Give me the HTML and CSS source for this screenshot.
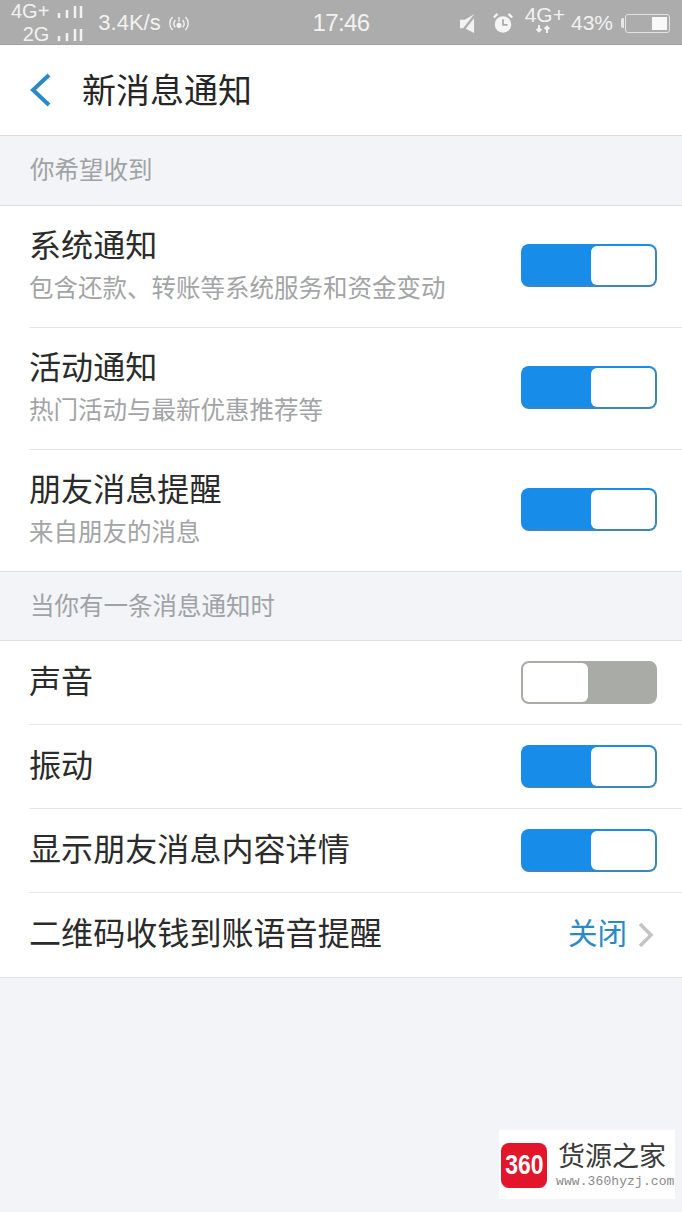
FILE: index.html
```html
<!DOCTYPE html>
<html>
  <head>
    <title>新消息通知</title>
    <link rel="stylesheet" href="styles.css">
  </head>
  <body>
    <!-- Status bar -->
    <div class="status-bar">
      <div class="status-left">
        <div class="sim-col">
          <div class="sim">4G+
            <svg class="bars" viewBox="0 0 26 12"><path d="M2 7v5M10 4v8M18 0v12M24 0v12" /></svg>
          </div>
          <div class="sim">2G
            <svg class="bars" viewBox="0 0 26 12"><path d="M2 7v5M10 4v8M18 0v12M24 0v12" /></svg>
          </div>
        </div>
        <span class="speed">3.4K/s</span>
        <svg class="hotspot" viewBox="0 0 26 20"><path d="M6 3C2 7 2 13 6 17M20 3c4 4 4 10 0 14M9 6c-2 3-2 6 0 8M17 6c2 3 2 6 0 8" /><path d="M13 3v5" /><circle cx="13" cy="12" r="2" /></svg>
      </div>
      <div class="status-time">17:46</div>
      <div class="status-right">
        <svg class="mute" viewBox="0 0 16 20"><path class="solid" d="M0 6h5l10-6v20L5 15H0z" /><path class="cut" d="M16 1 1 20" /></svg>
        <svg class="alarm" viewBox="0 0 24 24"><circle class="solid" cx="12" cy="13.500" r="9" /><path class="hands" d="M12 8v6h5" /><path class="ears" d="M2 6l4-4M22 6l-4-4" /></svg>
        <div class="net">
          <span>4G+</span>
          <svg class="arrows" viewBox="0 0 20 10"><path d="M5 0v8M2 5l3 3 3-3M15 10V2M12 5l3-3 3 3" /></svg>
        </div>
        <span class="percent">43%</span>
        <div class="battery-tip"></div>
        <div class="battery"><div class="battery-level"></div></div>
      </div>
    </div>

    <!-- Title bar -->
    <div class="nav-bar">
      <svg class="back" viewBox="0 0 24 36"><path d="M21 3 5 18l16 15" /></svg>
      <div class="nav-title">新消息通知</div>
    </div>

    <div class="section-title">你希望收到</div>
    <div class="group">
      <div class="row row-tall">
        <div class="row-text">
          <div class="row-name">系统通知</div>
          <div class="row-desc">包含还款、转账等系统服务和资金变动</div>
        </div>
        <div class="switch on"><div class="knob"></div></div>
      </div>
      <div class="row row-tall">
        <div class="row-text">
          <div class="row-name">活动通知</div>
          <div class="row-desc">热门活动与最新优惠推荐等</div>
        </div>
        <div class="switch on"><div class="knob"></div></div>
      </div>
      <div class="row row-tall">
        <div class="row-text">
          <div class="row-name">朋友消息提醒</div>
          <div class="row-desc">来自朋友的消息</div>
        </div>
        <div class="switch on"><div class="knob"></div></div>
      </div>
    </div>

    <div class="section-title section-second">当你有一条消息通知时</div>
    <div class="group">
      <div class="row">
        <div class="row-name">声音</div>
        <div class="switch off"><div class="knob"></div></div>
      </div>
      <div class="row">
        <div class="row-name">振动</div>
        <div class="switch on"><div class="knob"></div></div>
      </div>
      <div class="row">
        <div class="row-name">显示朋友消息内容详情</div>
        <div class="switch on"><div class="knob"></div></div>
      </div>
      <div class="row">
        <div class="row-name">二维码收钱到账语音提醒</div>
        <div class="row-value">
          <span class="value-text">关闭</span>
          <svg class="chevron" viewBox="0 0 16 26"><path d="M2 2l11 11L2 24" /></svg>
        </div>
      </div>
    </div>

    <!-- Watermark over the bottom corner -->
    <div class="watermark">
      <div class="mark-logo"><span class="mark-digits">360</span></div>
      <div class="mark-text">
        <div class="mark-name">货源之家</div>
        <div class="mark-url">www.360hyzj.com</div>
      </div>
    </div>
  </body>
</html>
```

FILE: styles.css
```css
* {
  box-sizing: border-box;
}

body {
  margin: 0;
  height: 1212px;
  overflow: hidden;
  position: relative;
  background-color: #f2f4f8;
  font-family: "Noto Sans CJK SC", "Liberation Sans", sans-serif;
  color: #2b2b2b;
}

/* Status bar */
.status-bar {
  height: 45px;
  background-color: #acacac;
  border-bottom: 1px solid #a2a2a2;
  color: #f2f2f2;
  font-family: "Liberation Sans", sans-serif;
  display: grid;
  grid-template-columns: 1fr auto 1fr;
  align-items: center;
  padding: 0 11px;
}

.status-left {
  display: flex;
  align-items: center;
}

.sim-col {
  display: flex;
  flex-direction: column;
  align-items: flex-end;
  font-size: 20px;
  line-height: 23px;
}

.sim {
  display: flex;
  align-items: center;
  gap: 8px;
}

.bars {
  width: 26px;
  height: 12px;
  fill: none;
  stroke: #f2f2f2;
  stroke-width: 2.500;
}

.speed {
  font-size: 22px;
  margin-left: 15px;
}

.hotspot {
  width: 24px;
  height: 19px;
  margin-left: 6px;
  fill: #f2f2f2;
  stroke: #f2f2f2;
  stroke-width: 1.500;
}

.hotspot path {
  fill: none;
}

.status-time {
  font-size: 24px;
  letter-spacing: -0.600px;
}

.status-right {
  display: flex;
  align-items: center;
  justify-content: flex-end;
  margin-right: 1px;
}

.mute {
  width: 15px;
  height: 19px;
  margin-right: 17px;
}

.mute .solid {
  fill: #f2f2f2;
}

.mute .cut {
  stroke: #acacac;
  stroke-width: 2.500;
}

.alarm {
  width: 22px;
  height: 22px;
  margin-right: 11px;
}

.alarm .solid {
  fill: #f5f5f5;
}

.alarm .hands {
  fill: none;
  stroke: #acacac;
  stroke-width: 2;
}

.alarm .ears {
  fill: none;
  stroke: #f5f5f5;
  stroke-width: 2.500;
}

.net {
  display: flex;
  flex-direction: column;
  align-items: center;
  font-size: 21px;
  line-height: 18px;
  margin-top: -6px;
  margin-right: 6px;
}

.arrows {
  width: 16px;
  height: 10px;
  margin-right: 3px;
  fill: none;
  stroke: #f2f2f2;
  stroke-width: 2.500;
}

.percent {
  font-size: 21px;
  margin-right: 8px;
}

.battery-tip {
  width: 3px;
  height: 10px;
  background-color: #e6e6e6;
  border-radius: 2px 0 0 2px;
  margin-right: 1px;
}

.battery {
  width: 45px;
  height: 19px;
  border: 1px solid #e2e2e2;
  border-radius: 3px;
  padding: 2px;
  display: flex;
  justify-content: flex-end;
}

.battery-level {
  width: 15px;
  background-color: #f8f8f8;
}

/* Title bar */
.nav-bar {
  height: 91px;
  background-color: #fff;
  border-bottom: 1px solid #d9dbdd;
  display: flex;
  align-items: center;
  padding-left: 28px;
}

.back {
  width: 24px;
  height: 36px;
  fill: none;
  stroke: #2b8ac6;
  stroke-width: 4;
}

.nav-title {
  font-size: 34px;
  margin-left: 30px;
  margin-bottom: 4px;
  color: #262626;
}

/* Section headings */
.section-title {
  height: 69px;
  display: flex;
  align-items: center;
  padding: 0 0 4px 30px;
  font-size: 24.500px;
  color: #a0a2a4;
}

.section-second {
  height: 68px;
  padding-bottom: 3px;
}

/* Rows */
.group {
  background-color: #fff;
  border-top: 1px solid #dfe0e2;
  border-bottom: 1px solid #dfe0e2;
  padding-left: 29px;
}

.row {
  height: 84px;
  display: flex;
  align-items: center;
  justify-content: space-between;
  padding-right: 25px;
  border-bottom: 1px solid #e6e6e6;
}

.row:last-child {
  border-bottom: none;
}

.row > .row-name {
  margin-bottom: 8px;
}

.row-tall {
  height: 122px;
}

.row-tall:last-child {
  height: 121px;
}

.row-tall .switch {
  margin-bottom: 2px;
}

.row-text {
  display: flex;
  flex-direction: column;
  gap: 6px;
  padding-bottom: 8px;
}

.row-name {
  font-size: 32.100px;
  line-height: 42px;
}

.row-desc {
  font-size: 24.500px;
  line-height: 34px;
  color: #a2a4a6;
}

/* Toggle switch */
.switch {
  width: 136px;
  height: 43px;
  border-radius: 8px;
  border: 2px solid;
  display: flex;
}

.switch.on {
  background-color: #178ce8;
  border-color: #3f86b4;
  border-left-color: #178ce8;
  border-top-color: #178ce8;
  border-bottom-color: #3f86b4;
  justify-content: flex-end;
}

.switch.on .knob {
  width: 64px;
}

.switch.off {
  background-color: #a9aca6;
  border-color: #a9aca6;
  justify-content: flex-start;
}

.knob {
  width: 65px;
  background-color: #fff;
  border-radius: 6px;
}

.row-value {
  display: flex;
  align-items: center;
  font-size: 29.500px;
  color: #2b8ac6;
  margin-right: 3px;
}

.value-text {
  margin-bottom: 8px;
}

.chevron {
  width: 16px;
  height: 26px;
  margin-left: 11px;
  fill: none;
  stroke: #c4c4c4;
  stroke-width: 3.500;
}

/* Watermark */
.watermark {
  position: absolute;
  left: 499px;
  top: 1130px;
  width: 176px;
  height: 69px;
  background-color: #fff;
  display: flex;
  align-items: center;
  padding-left: 2px;
}

.mark-logo {
  width: 46px;
  height: 45px;
  margin-top: 1px;
  background-color: #e3152b;
  border-radius: 8px;
  color: #fff;
  font-family: "Liberation Sans", sans-serif;
  font-weight: bold;
  font-size: 28px;
  display: flex;
  align-items: center;
  justify-content: center;
}

.mark-digits {
  transform: scaleX(0.820);
}

.mark-text {
  margin-left: 9px;
  display: flex;
  flex-direction: column;
  margin-top: -5px;
}

.mark-name {
  font-size: 27px;
  line-height: 39px;
  color: #3a3a3a;
  margin-left: 2px;
}

.mark-url {
  font-family: "Liberation Mono", monospace;
  font-size: 13px;
  line-height: 15px;
  letter-spacing: 0.100px;
  color: #8a8a8a;
}
```
